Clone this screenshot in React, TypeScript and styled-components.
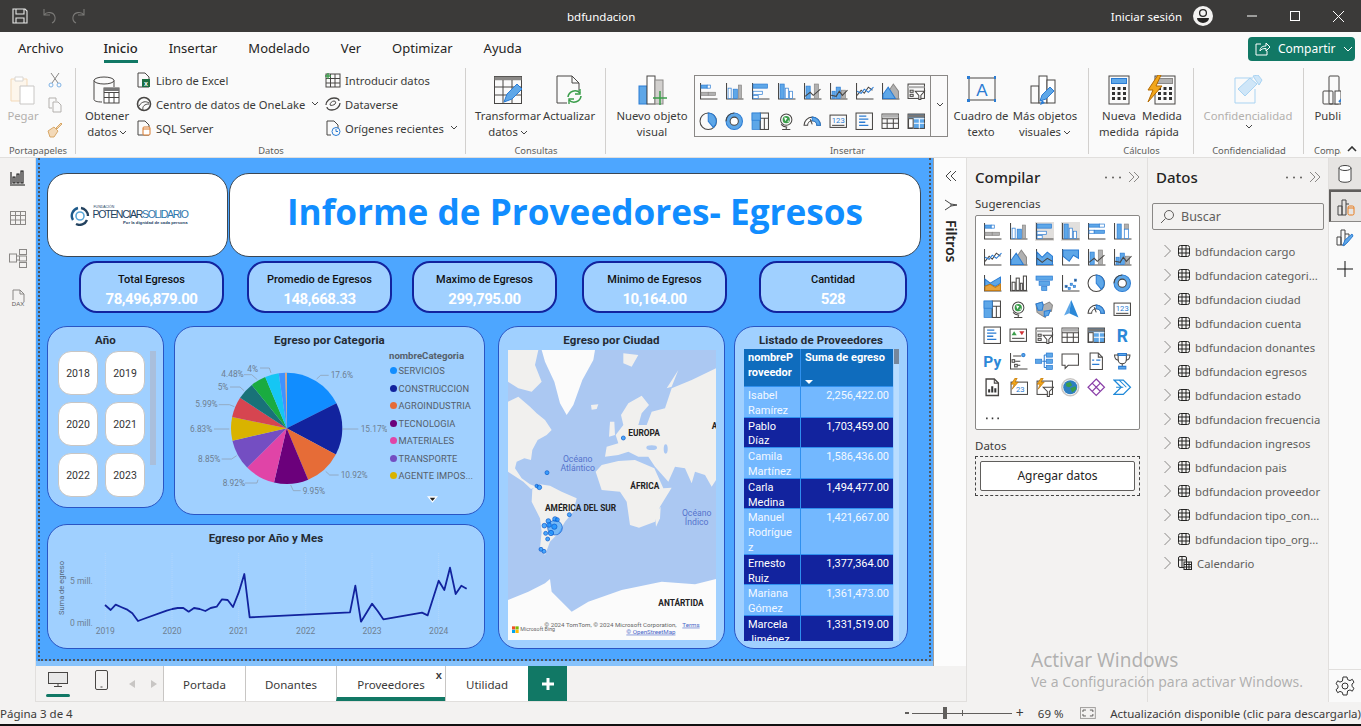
import React from 'react';
import styled, { createGlobalStyle } from 'styled-components';

const UI = `"Noto Sans", "Open Sans", "Liberation Sans", sans-serif`;
const DIN = `Roboto, "Liberation Sans", sans-serif`;

const Global = createGlobalStyle`
  html, body { margin: 0; padding: 0; background: #f3f2f1; }
  * { box-sizing: border-box; }
  body { font-family: ${UI}; }
`;

const Window = styled.div`
  position: relative;
  width: 1361px;
  height: 726px;
  overflow: hidden;
  display: flex;
  flex-direction: column;
  color: #252423;
`;

/* title bar */
const TitleBar = styled.div`
  height: 32px;
  flex: none;
  background: #3b3a39;
  color: #fff;
  display: flex;
  align-items: center;
  font-size: 11.5px;
`;
const QuickTools = styled.div`
  width: 567px;
  display: flex;
  align-items: center;
  gap: 12px;
  padding-left: 12px;
`;
const DocName = styled.div`
  flex: 1;
`;
const SignIn = styled.div`
  margin-right: 11px;
`;
const WinButtons = styled.div`
  display: flex;
  align-items: center;
  margin-left: 34px;
  gap: 33px;
  padding-right: 17px;
`;

/* tabs */
const TabRow = styled.div`
  height: 33px;
  flex: none;
  background: #fafafa;
  display: flex;
  align-items: center;
  padding: 0 6px 0 18px;
  gap: 31px;
  font-size: 13px;
`;
const MenuTab = styled.div<{ $active?: boolean; $first?: boolean }>`
  position: relative;
  height: 33px;
  line-height: 32px;
  margin-right: ${(p) => (p.$first ? 9 : 0)}px;
  font-weight: ${(p) => (p.$active ? 500 : 400)};
  &::after {
    content: '';
    display: ${(p) => (p.$active ? 'block' : 'none')};
    position: absolute;
    left: 0;
    right: 0;
    bottom: 2px;
    height: 3px;
    background: #117865;
  }
`;
const ShareButton = styled.div`
  margin-left: auto;
  width: 107px;
  height: 24px;
  background: #117865;
  color: #fff;
  border-radius: 4px;
  display: flex;
  align-items: center;
  gap: 7px;
  padding-left: 7px;
  font-size: 12px;
`;

/* ribbon */
const Ribbon = styled.div`
  height: 93px;
  flex: none;
  background: #fafafa;
  display: flex;
  border-bottom: 1px solid #e1dfdd;
`;
const Group = styled.div<{ $w: number; $pad?: number; $last?: boolean }>`
  width: ${(p) => p.$w}px;
  flex: none;
  padding-left: ${(p) => p.$pad || 0}px;
  display: flex;
  flex-direction: column;
  position: relative;
  overflow: hidden;
  &::after {
    content: '';
    display: ${(p) => (p.$last ? 'none' : 'block')};
    position: absolute;
    right: 0;
    top: 3px;
    bottom: 3px;
    width: 1px;
    background: #d2d0ce;
  }
`;
const GroupBody = styled.div`
  flex: 1;
  display: flex;
  padding-top: 10px;
`;
const GroupLabel = styled.div`
  height: 12px;
  margin-left: ${(p: { $off?: number }) => -(p.$off || 0)}px;
  text-align: center;
  font-size: 9.4px;
  line-height: 12px;
  color: #605e5c;
  white-space: nowrap;
`;
const LargeButton = styled.div<{ $w: number; $off?: boolean }>`
  width: ${(p) => p.$w}px;
  flex: none;
  display: flex;
  flex-direction: column;
  align-items: center;
  font-size: 11.3px;
  line-height: 16px;
  text-align: center;
  white-space: nowrap;
  color: ${(p) => (p.$off ? '#b3b0ad' : '#3b3a39')};
  svg { margin-bottom: 3px; flex: none; }
`;
const Chevron = styled.svg.attrs({ viewBox: '0 0 8 5', width: 8, height: 5 })`
  margin: 0 0 1px 2px !important;
  fill: none;
  stroke: #444;
  stroke-width: 1;
  vertical-align: middle;
`;
const ToolStack = styled.div`
  width: 26px;
  height: 66px;
  margin-top: -3px;
  display: flex;
  flex-direction: column;
  justify-content: space-between;
  align-items: center;
`;
const SmallColumn = styled.div<{ $w: number }>`
  width: ${(p) => p.$w}px;
  flex: none;
  display: flex;
  flex-direction: column;
  gap: 8px;
  margin-top: -3px;
`;
const SmallItem = styled.div`
  height: 16px;
  display: flex;
  align-items: center;
  gap: 4px;
  font-size: 11.2px;
  color: #3b3a39;
  white-space: nowrap;
`;
const Gallery = styled.div`
  margin-left: 2px;
  width: 254px;
  height: 62px;
  flex: none;
  display: flex;
  border: 1px solid #8a8886;
`;
const GalleryGrid = styled.div`
  flex: 1;
  display: grid;
  grid-template-columns: repeat(9, 26px);
  grid-auto-rows: 30px;
  place-items: center;
`;
const GalleryMore = styled.div`
  width: 17px;
  border-left: 1px solid #8a8886;
  display: flex;
  justify-content: center;
  padding-top: 26px;
`;
const Collapse = styled.svg.attrs({ viewBox: '0 0 10 6', width: 10, height: 6 })`
  position: absolute;
  left: 1347px;
  top: 146px;
  fill: none;
  stroke: #333;
  stroke-width: 1.6;
`;

/* main */
const Main = styled.div`
  flex: 1;
  display: flex;
  min-height: 0;
`;
const LeftNav = styled.div`
  width: 36px;
  flex: none;
  background: #f3f2f1;
  border-right: 1px solid #e1dfdd;
  display: flex;
  flex-direction: column;
  align-items: center;
  padding-top: 10px;
  gap: 20px;
`;
const Workspace = styled.div`
  width: 930px;
  flex: none;
  display: flex;
  flex-direction: column;
`;
const TopArea = styled.div`
  flex: 1;
  display: flex;
  background: #fcfcfc;
`;
const Canvas = styled.div`
  width: 898px;
  background: #4da6ff;
  border-right: 1px solid #a19f9d;
  display: flex;
  flex-direction: column;
`;
const Report = styled.div`
  height: 503px;
  margin: 0 2px 0 2px;
  border-left: 2px dotted #50565e;
  border-right: 2px dotted #50565e;
  border-bottom: 2px dotted #50565e;
  padding: 15px 0 0 7px;
`;
const CanvasFoot = styled.div`
  flex: 1;
  background: #86c2fb;
`;
const FilterPane = styled.div`
  flex: 1;
  display: flex;
  flex-direction: column;
  align-items: center;
  padding-top: 12px;
  padding-left: 2px;
`;
const FilterIcon = styled.svg.attrs({ viewBox: '0 0 14 14', width: 14, height: 14 })`
  margin-top: 16px;
  fill: none;
  stroke: #444;
  stroke-width: 1;
`;
const FilterLabel = styled.div`
  writing-mode: vertical-rl;
  font-size: 14px;
  font-weight: 600;
  margin-top: 8px;
  color: #252423;
`;

const HeaderRow = styled.div`
  display: flex;
  gap: 1px;
`;
const WhiteCard = styled.div<{ $w: number }>`
  width: ${(p) => p.$w}px;
  height: 84px;
  background: #fff;
  border: 1px solid #3b4754;
  border-radius: 20px;
  display: flex;
  align-items: center;
  justify-content: center;
`;
const LogoMark = styled.div`
  display: flex;
  align-items: center;
  gap: 2px;
  padding: 1px 17px 0 0;
`;
const LogoText = styled.div`
  display: flex;
  flex-direction: column;
  font-family: "Liberation Sans", sans-serif;
  color: #23425f;
`;
const LogoTiny = styled.span`
  font-size: 3.5px;
  line-height: 4px;
  padding-left: 1px;
`;
const LogoName = styled.span`
  font-size: 10.5px;
  line-height: 11px;
  letter-spacing: -1.3px;
  white-space: nowrap;
  b { font-weight: 400; color: #2f78ad; }
`;
const LogoTag = styled.span`
  font-size: 4.2px;
  line-height: 6px;
  font-weight: 700;
  text-align: right;
  white-space: nowrap;
`;
const ReportTitle = styled.div`
  font-family: "Open Sans", sans-serif;
  font-size: 35.2px;
  font-weight: 700;
  color: #118dff;
  white-space: nowrap;
  padding-bottom: 9px;
`;
const KpiRow = styled.div`
  display: flex;
  margin-top: 4px;
  height: 52px;
`;
const Kpi = styled.div<{ $left: number; $w?: number }>`
  width: ${(p) => p.$w || 145}px;
  margin-left: ${(p) => p.$left}px;
  background: #a0d0ff;
  border: 2px solid #12239e;
  border-radius: 18px;
  display: flex;
  flex-direction: column;
  align-items: center;
  padding-top: 10px;
`;
const KpiLabel = styled.div`
  font-family: ${DIN};
  font-size: 11px;
  font-weight: 500;
  line-height: 14px;
  color: #111;
  white-space: nowrap;
`;
const KpiValue = styled.div`
  font-family: ${DIN};
  font-size: 15px;
  font-weight: 700;
  line-height: 25px;
  color: #fff;
  letter-spacing: -0.45px;
`;
const Board = styled.div`
  display: flex;
  margin-top: 13px;
`;
const LeftColumn = styled.div`
  width: 438px;
  flex: none;
  display: flex;
  flex-direction: column;
  gap: 9px;
`;
const TopPair = styled.div`
  display: flex;
  gap: 10px;
  align-items: flex-start;
`;
const Card = styled.div<{ $w: number; $h: number; $left?: number }>`
  width: ${(p) => p.$w}px;
  height: ${(p) => p.$h}px;
  margin-left: ${(p) => p.$left || 0}px;
  flex: none;
  background: #a0d0ff;
  border: 1px solid #2a55c4;
  border-radius: 20px;
  overflow: hidden;
`;
const CardTitle = styled.div`
  height: 23px;
  text-align: center;
  font-family: ${DIN};
  font-size: 11.5px;
  font-weight: 700;
  line-height: 27px;
  color: #252b33;
  letter-spacing: 0.1px;
`;
const SlicerBody = styled.div`
  display: flex;
  padding-left: 10px;
  padding-top: 1px;
`;
const SlicerGrid = styled.div`
  display: grid;
  grid-template-columns: 40px 40px;
  grid-auto-rows: 44px;
  column-gap: 7px;
  row-gap: 7px;
`;
const SlicerItem = styled.div`
  background: #fff;
  border: 1px solid #c8c6c4;
  border-radius: 13px;
  display: flex;
  align-items: center;
  justify-content: center;
  font-family: ${DIN};
  font-size: 10.5px;
  color: #333;
`;
const SlicerScroll = styled.div`
  width: 6px;
  height: 114px;
  margin-left: 5px;
  background: #a9bfdc;
`;
const PieBody = styled.div`
  display: flex;
`;
const PieSvg = styled.svg`
  margin: 4.5px 0 0 -1px;
  flex: none;
  text {
    font-family: ${DIN};
    font-size: 25px;
    fill: #6e7f92;
  }
`;
const Legend = styled.div`
  position: relative;
  margin-left: 2px;
  width: 92px;
  height: 165px;
  font-family: ${DIN};
  font-size: 9.3px;
  color: #555f6b;
`;
const LegendHead = styled.div`
  font-weight: 700;
  font-size: 9.6px;
  line-height: 12px;
`;
const LegendItem = styled.div`
  display: flex;
  align-items: center;
  height: 17.5px;
  gap: 1.5px;
  padding-left: 1px;
  white-space: nowrap;
  letter-spacing: 0.1px;
`;
const LegendDot = styled.span<{ $c: string }>`
  width: 7px;
  height: 7px;
  border-radius: 50%;
  flex: none;
  background: ${(p) => p.$c};
`;
const LegendMore = styled.svg.attrs({ viewBox: '0 0 12 7', width: 11, height: 7 })`
  position: absolute;
  left: 38px;
  top: 146px;
`;
const LineSvg = styled.svg`
  display: block;
  margin: 1px 0 0 3px;
  text {
    font-family: ${DIN};
    font-size: 8.5px;
    fill: #6e7f92;
  }
`;
const MapFrame = styled.svg`
  display: block;
  margin: 0 0 0 9px;
  text { font-family: ${DIN}; }
`;
const TableWrap = styled.div`
  display: flex;
  margin: -1px 0 0 9px;
  height: 292px;
`;
const Table = styled.div`
  width: 149px;
  overflow: hidden;
  font-family: ${DIN};
  font-size: 11px;
  line-height: 14.8px;
`;
const TableRow = styled.div<{ $dark?: boolean; $head?: boolean }>`
  display: grid;
  grid-template-columns: 56px 93px;
  background: ${(p) => (p.$head ? '#0f6cbd' : p.$dark ? '#12239e' : '#73b8ff')};
  color: ${(p) => (p.$dark || p.$head ? '#fff' : '#f4f9ff')};
  font-weight: ${(p) => (p.$head ? 700 : 400)};
  border-bottom: 1px solid #2f8fee;
`;
const TableCell = styled.div<{ $right?: boolean }>`
  padding: 2px 4px 0;
  margin-bottom: -2px;
  white-space: pre-line;
  text-align: ${(p) => (p.$right ? 'right' : 'left')};
  & + & { border-left: 1px solid #2f8fee; }
`;
const HeadCell = styled(TableCell)<{ $sort?: boolean }>`
  position: relative;
  height: 37px;
  margin-bottom: 0;
  padding-top: 2px;
  white-space: pre;
  &::after {
    content: '';
    display: ${(p) => (p.$sort ? 'block' : 'none')};
    position: absolute;
    left: 4px;
    bottom: 2px;
    border: 4px solid transparent;
    border-top-color: #fff;
    border-bottom: 0;
  }
`;
const TableScroll = styled.div`
  width: 5px;
  margin-left: 1px;
  background: #b8dcff;
  &::before {
    content: '';
    display: block;
    height: 15px;
    background: #76879c;
  }
`;

/* page tabs */
const PageBar = styled.div`
  height: 36px;
  flex: none;
  background: #f3f2f1;
  display: flex;
  border-bottom: 1px solid #e1dfdd;
`;
const ViewTools = styled.div`
  width: 127px;
  flex: none;
  display: flex;
  align-items: center;
  padding-left: 9px;
`;
const ViewBtn = styled.div<{ $on?: boolean; $w: number; $left?: number }>`
  position: relative;
  width: ${(p) => p.$w}px;
  margin-left: ${(p) => p.$left || 0}px;
  height: 36px;
  display: flex;
  align-items: center;
  justify-content: center;
  padding-bottom: 8px;
  &::after {
    content: '';
    display: ${(p) => (p.$on ? 'block' : 'none')};
    position: absolute;
    left: 1px;
    width: 24px;
    bottom: 5px;
    height: 3px;
    border-radius: 2px;
    background: #117865;
  }
`;
const PageArrow = styled.svg.attrs({ viewBox: '0 0 6 8', width: 6, height: 8 })<{ $left: number }>`
  margin-left: ${(p) => p.$left}px;
  fill: #c8c6c4;
`;
const PageTab = styled.div<{ $w: number; $on?: boolean }>`
  position: relative;
  width: ${(p) => p.$w}px;
  flex: none;
  background: #fff;
  border-left: 1px solid #c8c6c4;
  font-size: 11.5px;
  text-align: center;
  line-height: 38px;
  color: #3b3a39;
  border-bottom: ${(p) => (p.$on ? '4px solid #117865' : '0')};
`;
const TabClose = styled.span`
  position: absolute;
  right: 3px;
  top: -10px;
  font-size: 11px;
  font-weight: 600;
`;
const AddPage = styled.div`
  width: 39px;
  background: #117865;
  display: flex;
  align-items: center;
  justify-content: center;
  color: #fff;
`;

/* panes */
const Pane = styled.div`
  width: 181px;
  flex: none;
  background: #f3f2f1;
  border-left: 1px solid #e1dfdd;
  padding-top: 8px;
  display: flex;
  flex-direction: column;
`;
const PaneHead = styled.div`
  height: 22px;
  display: flex;
  align-items: center;
  padding: 0 7px 0 8px;
`;
const PaneTitle = styled.div`
  flex: 1;
  font-size: 15px;
  font-weight: 500;
`;
const PaneDots = styled.svg.attrs({ viewBox: '0 0 18 3', width: 18, height: 3 })`
  margin-right: 6px;
  fill: #605e5c;
`;
const SectionLabel = styled.div`
  margin: 8px 0 0 8px;
  font-size: 11.5px;
  line-height: 16px;
  color: #3b3a39;
`;
const VizBox = styled.div`
  margin: 3px 0 0 8px;
  width: 165px;
  height: 215px;
  background: #fff;
  border: 1px solid #8a8886;
  border-radius: 2px;
  padding: 2px 0 0 3px;
  display: grid;
  grid-template-columns: repeat(6, 26px);
  grid-auto-rows: 26px;
  place-items: center;
`;
const DropZone = styled.div`
  margin: 2px 0 0 8px;
  width: 165px;
  height: 40px;
  border: 1px dashed #444;
  padding: 4px;
`;
const AddButton = styled.div`
  height: 30px;
  background: #fff;
  border: 1px solid #605e5c;
  border-radius: 2px;
  text-align: center;
  line-height: 28px;
  font-size: 12px;
`;
const SearchBox = styled.div`
  margin: 15px 0 0 4px;
  width: 172px;
  height: 27px;
  border: 1px solid #8a8886;
  border-radius: 2px;
  display: flex;
  align-items: center;
  gap: 7px;
  padding-left: 7px;
  font-size: 12.5px;
  color: #605e5c;
`;
const FieldList = styled.div`
  margin-top: 9px;
  padding-left: 15px;
`;
const FieldRow = styled.div`
  height: 24px;
  display: flex;
  align-items: center;
  gap: 5.5px;
  font-size: 11.3px;
  color: #605e5c;
  white-space: nowrap;
`;
const Rail = styled.div`
  flex: 1;
  background: #fafafa;
  border-left: 1px solid #e1dfdd;
  display: flex;
  flex-direction: column;
  align-items: center;
`;
const RailButton = styled.div<{ $on?: boolean; $sel?: boolean }>`
  width: 32px;
  height: ${(p) => (p.$on ? 32 : 31)}px;
  display: flex;
  align-items: center;
  justify-content: center;
  background: ${(p) => (p.$on ? '#e6e4e2' : 'transparent')};
  border: ${(p) => (p.$sel ? '2px solid #605e5c' : '0')};
  border-right: 0;
  border-bottom: ${(p) => (p.$on ? '1px solid #8a8886' : '0')};
`;
const RailFoot = styled.div`
  margin-top: auto;
  width: 100%;
  height: 33px;
  border-top: 1px solid #e1dfdd;
  display: flex;
  align-items: center;
  justify-content: center;
`;

/* status */
const StatusBar = styled.div`
  height: 24px;
  flex: none;
  background: #f3f2f1;
  border-bottom: 2px solid #111;
  display: flex;
  align-items: center;
  font-size: 11.5px;
  color: #3b3a39;
`;
const PageInfo = styled.div`
  width: 905px;
  flex: none;
`;
const ZoomMinus = styled.div`
  width: 4px;
  height: 2px;
  background: #605e5c;
`;
const ZoomTrack = styled.div`
  position: relative;
  width: 101px;
  height: 1px;
  margin-left: 3px;
  background: #605e5c;
`;
const ZoomThumb = styled.span`
  position: absolute;
  left: 31px;
  top: -6px;
  width: 4px;
  height: 12px;
  background: #605e5c;
`;
const ZoomTick = styled.span`
  position: absolute;
  left: 50px;
  top: -3px;
  width: 1px;
  height: 6px;
  background: #605e5c;
`;
const ZoomPlus = styled.div`
  margin-left: 4px;
  font-size: 14px;
  line-height: 14px;
`;
const ZoomValue = styled.div`
  margin-left: 14px;
  width: 43px;
`;
const UpdateNote = styled.div`
  margin-left: 14px;
  white-space: nowrap;
`;
const Watermark = styled.div`
  position: absolute;
  left: 1031px;
  top: 648px;
  color: rgba(120, 120, 120, 0.55);
  pointer-events: none;
  white-space: nowrap;
`;
const WatermarkBig = styled.div`
  font-size: 19px;
  line-height: 24px;
`;
const WatermarkSmall = styled.div`
  font-size: 14px;
  line-height: 20px;
`;

/* icons */
const INK = '#484644';
const BL = '#5ea7e8';
const BD = '#2b7cd3';
const GR = '#b1b1b1';

const Svg = ({ s = 30, vb = 30, children }: { s?: number; vb?: number; children: React.ReactNode }) => (
  <svg width={s} height={s} viewBox={`0 0 ${vb} ${vb}`} fill="none" stroke={INK} strokeWidth={1}>
    {children}
  </svg>
);
const Bar = (x: number, y: number, w: number, h: number, f = BL) => (
  <rect x={x} y={y} width={w} height={h} fill={f} stroke={f === GR ? '#8a8886' : BD} strokeWidth={0.7} />
);
const AxisL = <path d="M1.5 1v15.5H18" />;

const viz: Record<string, React.ReactNode> = {
  stackedBar: <>{AxisL}{Bar(2, 3, 6, 3)}{Bar(8, 3, 3, 3, '#fff')}{Bar(2, 10, 7, 3, GR)}{Bar(9, 10, 7, 3, GR)}</>,
  stackedCol: <>{AxisL}{Bar(3, 6, 3, 10, '#fff')}{Bar(8, 7, 4, 9)}{Bar(13, 3, 3, 13, GR)}</>,
  clusterBar: <>{AxisL}{Bar(2, 2, 14, 4)}{Bar(2, 9, 9, 3, '#fff')}{Bar(2, 13, 5, 3, '#fff')}</>,
  clusterCol: <>{AxisL}{Bar(3, 2, 4, 14)}{Bar(8, 6, 3, 10, '#fff')}{Bar(12, 9, 3, 7, '#fff')}</>,
  clusterBarSel: <><rect x="0" y="0" width="20" height="20" fill="#e1dfdd" stroke="none" />{AxisL}{Bar(2, 2, 14, 4)}{Bar(2, 9, 9, 3, '#fff')}{Bar(2, 13, 5, 3, '#fff')}</>,
  clusterColSel: <><rect x="0" y="0" width="20" height="20" fill="#e1dfdd" stroke="none" />{AxisL}{Bar(3, 2, 4, 14)}{Bar(8, 6, 3, 10, '#fff')}{Bar(12, 9, 3, 7, '#fff')}</>,
  bar100: <>{AxisL}{Bar(2, 2, 10, 3)}{Bar(12, 2, 5, 3, '#fff')}{Bar(2, 8, 5, 3, '#fff')}{Bar(7, 8, 10, 3)}</>,
  col100: <>{AxisL}{Bar(4, 2, 4, 14)}{Bar(11, 2, 4, 5, GR)}{Bar(11, 7, 4, 9, '#fff')}</>,
  line: <>{AxisL}<path d="M2 13l4-5 3 3 4-6 4 3" stroke={INK} /><path d="M2 9l4 2 3-4 4 3 5-5" stroke={BD} /></>,
  area: <>{AxisL}<path d="M8 8l4-6 5 7v7H8z" fill={GR} stroke="#8a8886" /><path d="M2 16v-4l5-7 7 11z" fill={BL} stroke={BD} /></>,
  areaStack: <>{AxisL}<path d="M2 4l5 5 5-5 5 4v8H2z" fill={BL} stroke={BD} /><path d="M2 10l5 4 5-4 5 3" stroke={INK} /></>,
  areaInv: <>{AxisL}<path d="M2 2h15v8l-5-3-4 6-6-5z" fill={BL} stroke={BD} /></>,
  lineCol: <>{AxisL}{Bar(3, 4, 4, 12)}{Bar(11, 2, 4, 14, GR)}<path d="M2 14l5-4 3 3 7-6" stroke={INK} /></>,
  lineCol2: <>{AxisL}{Bar(3, 9, 3, 7)}{Bar(7, 5, 4, 11)}{Bar(12, 8, 4, 8, GR)}<path d="M2 13l5 1 3-5 3 4 5-5" stroke={INK} /></>,
  ribbon: <>{AxisL}<path d="M2 5l5 4 5-3 5-3v6l-5 3-5-2-5 2z" fill={BL} stroke={BD} /><path d="M2 12l5-2 5 3 5-3v6H2z" fill="#e8a33d" stroke="#c47c16" /></>,
  waterfall: <><path d="M1.5 1v15.5H18" /><rect x="3" y="8" width="3" height="8" /><rect x="7" y="4" width="3" height="12" /><rect x="11" y="9" width="2" height="7" /><rect x="14" y="2" width="3" height="14" /></>,
  funnel: <>{Bar(1, 2, 16, 4)}{Bar(4, 7, 10, 4)}{Bar(6.5, 12, 5, 4)}</>,
  scatter: <><path d="M1.5 1v15.5H18" />{Bar(4, 11, 2, 2, INK)}{Bar(9, 9, 2, 2)}{Bar(13, 5, 2, 2, INK)}{Bar(12, 11, 2, 2)}{Bar(7, 13, 2, 2)}</>,
  pie: <><circle cx="9" cy="9" r="8" /><path d="M9 9V1a8 8 0 0 1 5 14z" fill={BL} stroke={BD} /></>,
  donut: <><circle cx="9" cy="9" r="8" stroke={BD} fill={BL} /><path d="M9 1a8 8 0 0 0-8 8" stroke={INK} /><circle cx="9" cy="9" r="4" fill="#fff" stroke={INK} /></>,
  treemap: <>{Bar(1, 1, 8, 16)}<rect x="9" y="1" width="8" height="16" /><path d="M9 6h8M13 6v11" />{Bar(1, 1, 8, 7)}</>,
  globe: <><circle cx="9" cy="7.5" r="5.5" /><circle cx="9" cy="7.5" r="3.5" fill="#3a9d4a" stroke="none" /><path d="M7 5l3 1-2 3zM11 8l1 1-2 1z" fill="#fff" stroke="none" /><path d="M4 12a7 7 0 0 0 6 2.5M9 14.5V17M5 17h8" /></>,
  filledMap: <><path d="M1 4l6-2 1 3 6-3 3 3-1 6-5 1-1 5-5-3-3-2z" fill={GR} stroke="#8a8886" /><path d="M1 4l6-2 1 3-1 5H3zM9 11l6-1-2 5-4 1z" fill={BL} stroke={BD} /></>,
  azure: <><path d="M10 0L3 15l5-2z" fill={BL} stroke="none" /><path d="M10 0l7 17-9-4z" fill="#2b88d8" stroke="none" /></>,
  gauge: <><path d="M1 13a8 8 0 0 1 16 0h-3.5a4.5 4.5 0 0 0-9 0z" fill="#fff" /><path d="M9 5a8 8 0 0 1 8 8h-3.5A4.5 4.5 0 0 0 9 8.5z" fill={BL} stroke={BD} /><path d="M7 7l2 5" /></>,
  card: <><rect x="1" y="3" width="16" height="12" /><path d="M3 13h12" /><text x="9" y="11" textAnchor="middle" fontSize="7.5" fill={BD} stroke="none" fontFamily="Roboto">123</text></>,
  multi: <><rect x="1" y="1" width="16" height="16" /><path d="M4 4h7M4 7h9M4 10h6M4 13h9" stroke={BD} strokeWidth={1.3} /></>,
  kpi: <><rect x="1" y="3" width="16" height="12" /><path d="M5 5l2.5 4h-5z" fill="#3a9d4a" stroke="none" /><path d="M10 5h5l-2.5 4z" fill="#d13438" stroke="none" /><path d="M3 12h12" /></>,
  slicer: <><rect x="1" y="2" width="16" height="14" /><path d="M1 5h16" strokeWidth={2} stroke={GR} /><rect x="3" y="8" width="3" height="2" /><rect x="3" y="12" width="3" height="2" /><path d="M8 9h9l-3.5 4v4h-2v-4z" fill="#fff" /></>,
  table: <><rect x="1" y="2" width="16" height="14" /><path d="M1 6.5h16M1 11h16M6 6v10M12 6v10" /><path d="M1 4h16" stroke={GR} strokeWidth={3} /></>,
  matrix: <><rect x="1" y="2" width="16" height="14" fill={BL} stroke={INK} /><path d="M1 4h16" stroke="#777" strokeWidth={3} /><path d="M1 6.5h16M1 11h16M6 6v10M12 6v10" stroke="#fff" /><rect x="1.5" y="6.5" width="4.5" height="9" fill="#fff" stroke={INK} /></>,
  rLang: <text x="9" y="15.5" textAnchor="middle" fontSize="17" fontWeight="700" fill="#2b88d8" stroke="none" fontFamily="Roboto">R</text>,
  pyLang: <text x="9" y="14.5" textAnchor="middle" fontSize="15" fontWeight="700" fill="#2b88d8" stroke="none" fontFamily="Roboto">Py</text>,
  influencers: <><path d="M1.5 1v15.5H18" /><path d="M4 4h8M6 9h5M8 13h3" /><circle cx="14" cy="3" r="1.6" fill={BL} stroke={BD} /><rect x="3" y="7.5" width="2.5" height="2.5" /><rect x="5.5" y="12" width="2.5" height="2.5" /></>,
  decomp: <>{Bar(0.5, 7, 6, 4)}{Bar(11, 1, 6, 4)}{Bar(11, 7, 6, 4)}{Bar(11, 13, 6, 4)}<path d="M7 9h4M9 3v12M9 3h2M9 15h2" stroke={BD} /></>,
  qna: <path d="M1 2h16v11H7l-3 3v-3H1z" stroke={INK} fill="#fff" />,
  narrative: <><path d="M3 1h8l4 4v12H3z" /><path d="M11 1v4h4" /><path d="M5 8h2M9 8h4M5 12h7" stroke={BD} strokeWidth={1.2} /></>,
  trophy: <><path d="M5 1.5h8v6a4 4 0 0 1-8 0z" stroke={INK} /><path d="M5 1.5h8v2H5z" fill={BL} stroke={BD} /><path d="M5 3H1.5c0 3 1.5 5 4 5M13 3h3.5c0 3-1.5 5-4 5M9 11.5V14" /><path d="M5.5 14h7v2.5h-7z" fill={BL} stroke={BD} /></>,
  paginated: <><path d="M3 1h8l4 4v12H3z" strokeWidth={1.3} /><path d="M11 1v4h4" /><path d="M6 14v-3M9 14V8M12 14v-4" stroke="#333" strokeWidth={2} /></>,
  flashCard: <><rect x="2" y="4" width="16" height="12" /><text x="11" y="14" textAnchor="middle" fontSize="7.5" fill={BD} stroke="none" fontFamily="Roboto">23</text><path d="M6 0L2 6h3L3 11l6-7H6l2-4z" fill="#f2a71b" stroke="#b46a00" strokeWidth={0.6} /></>,
  flashSlicer: <><rect x="2" y="3" width="15" height="13" /><path d="M8 9h10l-4 4v5h-2v-5z" fill="#fff" /><path d="M6 0L2 6h3L3 11l6-7H6l2-4z" fill="#f2a71b" stroke="#b46a00" strokeWidth={0.6} /></>,
  arcgis: <><circle cx="9" cy="9" r="8.2" stroke="#c8c6c4" strokeWidth={1.5} /><circle cx="9" cy="9" r="6.8" fill="#2f7fc1" stroke="none" /><path d="M5 5l4-1 2 3-3 2-3-1zM9 10l5-2 1 3-4 3z" fill="#3a9d4a" stroke="none" /></>,
  powerApps: <path d="M9 1l8 8-8 8-8-8zM5 5l4 4 4-4M5 13l4-4 4 4" stroke="#8a3fa8" strokeWidth={1.2} />,
  automate: <><path d="M1 2h9l7 7-7 7H1l7-7z" stroke="#1e88d8" strokeWidth={1.2} /><path d="M6 2l7 7M3 9h7" stroke="#1e88d8" /></>,
  dots: <path d="M3 14h1.5M8.5 14H10M14 14h1.5" strokeWidth={1.6} stroke="#333" />,
};
const Viz = ({ k, s = 19 }: { k: string; s?: number }) => (
  <Svg s={s} vb={18.5}>{viz[k]}</Svg>
);

const galleryIcons = [
  'stackedBar', 'stackedCol', 'clusterBar', 'clusterCol', 'lineCol', 'lineCol2', 'line', 'area', 'slicer',
  'pie', 'donut', 'treemap', 'globe', 'gauge', 'card', 'multi', 'table', 'matrix',
];
const buildIcons = [
  'stackedBar', 'stackedCol', 'clusterBarSel', 'clusterColSel', 'bar100', 'col100',
  'line', 'area', 'areaStack', 'areaInv', 'lineCol', 'lineCol2',
  'ribbon', 'waterfall', 'funnel', 'scatter', 'pie', 'donut',
  'treemap', 'globe', 'filledMap', 'azure', 'gauge', 'card',
  'multi', 'kpi', 'slicer', 'table', 'matrix', 'rLang',
  'pyLang', 'influencers', 'decomp', 'qna', 'narrative', 'trophy',
  'paginated', 'flashCard', 'flashSlicer', 'arcgis', 'powerApps', 'automate',
  'dots',
];

const Pencil = ({ x, y }: { x: number; y: number }) => (
  <path transform={`translate(${x} ${y})`} d="M0 14L2 8 10 0l4 4-8 8z" fill={BL} stroke="#2b7cd3" />
);
const PasteIcon = () => (
  <Svg>
    <path d="M3 4h16v22H3z" stroke="#f3d9b8" fill="#fdf6ec" />
    <path d="M7 2h8v4H7z" stroke="#d8d6d4" fill="#fff" />
    <path d="M12 11h14v18H12z" stroke="#c8c6c4" fill="#fff" />
  </Svg>
);
const GetDataIcon = () => (
  <Svg>
    <ellipse cx="12" cy="5.5" rx="10" ry="3.5" />
    <path d="M2 5.5v19c0 1.5 3 2.5 8 2.5M22 5.5V12" />
    <rect x="12" y="13" width="15" height="15" fill="#fff" />
    <path d="M12 17.5h15M12 22.5h15M17 17v11M22 17v11" />
    <path d="M12 14.5h15" strokeWidth={3} stroke="#777" />
  </Svg>
);
const TransformIcon = () => (
  <Svg>
    <rect x="1.5" y="1.5" width="27" height="27" />
    <path d="M1.5 3.5h27" stroke="#8a8886" strokeWidth={3.5} />
    <path d="M1.5 12h27M1.5 20h27M10 5v24M19 5v24" />
    <g transform="translate(11 9)"><path d="M0 18L3 10 13 0l5 5-10 10z" fill={BL} stroke="#2b7cd3" /></g>
  </Svg>
);
const RefreshIcon = () => (
  <Svg>
    <path d="M3 1h15l7 7v8M13 28H3V1M18 1v7h7" />
    <path d="M14 22a7 7 0 0 1 12-4M27 21a7 7 0 0 1-12 4" stroke="#3a9d4a" strokeWidth={1.6} />
    <path d="M26 14v5h-5M15 29v-5h5" stroke="#3a9d4a" strokeWidth={1.4} />
  </Svg>
);
const NewVisualIcon = () => (
  <Svg>
    <rect x="2" y="11" width="8" height="18" fill={BL} stroke={BD} />
    <rect x="10" y="1" width="8" height="28" fill="#fff" />
    <rect x="18" y="5" width="8" height="24" fill="#d2d0ce" stroke="#8a8886" />
    <path d="M16 23h14M23 16v14" stroke="#3a9d4a" strokeWidth={1.5} />
  </Svg>
);
const TextBoxIcon = () => (
  <Svg>
    <rect x="3" y="3" width="26" height="22" />
    <rect x="1" y="1" width="3" height="3" fill={BD} stroke="none" />
    <rect x="28" y="1" width="3" height="3" fill={BD} stroke="none" />
    <rect x="1" y="24" width="3" height="3" fill={BD} stroke="none" />
    <rect x="28" y="24" width="3" height="3" fill={BD} stroke="none" />
    <text x="16" y="21" textAnchor="middle" fontSize="17" fill={BD} stroke="none" fontFamily="Liberation Sans">A</text>
  </Svg>
);
const MoreVisualsIcon = () => (
  <Svg>
    <rect x="1" y="11" width="8" height="17" />
    <rect x="9" y="1" width="8" height="27" fill="#fff" />
    <rect x="17" y="5" width="8" height="23" fill="#fff" />
    <Pencil x={10} y={12} />
    <path d="M10 30l2-5 3 3z" fill={BD} stroke="none" />
  </Svg>
);
const Calculator = ({ head = BL }: { head?: string }) => (
  <>
    <rect x="5" y="1" width="20" height="28" />
    <rect x="7.500" y="3.500" width="15" height="5" fill={head} stroke={head === BL ? BD : '#8a8886'} />
    {[12, 17, 22].map((y) => [8, 13.500, 19].map((x) => <rect key={`${x}${y}`} x={x} y={y} width="3" height="3" fill="#333" stroke="none" />))}
  </>
);
const MeasureIcon = () => (
  <Svg><Calculator /></Svg>
);
const QuickMeasureIcon = () => (
  <Svg>
    <g transform="translate(3 0)"><Calculator head={GR} /></g>
    <path d="M11 0L1 15h5L1 27l14-16H9l5-11z" fill="#f2a71b" stroke="#b46a00" />
  </Svg>
);
const SensitivityIcon = () => (
  <Svg>
    <path d="M2 3h18M2 3v25h20V14" stroke="#a9d3f2" />
    <path d="M5 14L17 3l7 6-12 12z" fill="#cfe6f8" stroke="#a9d3f2" />
    <path d="M20 1l5-1 4 5-3 5z" fill="#cfe6f8" stroke="#a9d3f2" />
  </Svg>
);
const PublishIcon = () => (
  <Svg>
    <rect x="2" y="16" width="10" height="13" rx="1" />
    <rect x="8" y="1" width="10" height="28" rx="1" />
    <rect x="14" y="16" width="6" height="13" fill="#fff" />
    <path d="M18 27l6-6" stroke={BD} strokeWidth={2} />
  </Svg>
);
const ExcelIcon = () => (
  <Svg s={16} vb={16}>
    <path d="M2 1h7l4 4v10H2z" />
    <rect x="6" y="7" width="8" height="8" fill="#1d6f42" stroke="none" />
    <text x="10" y="14" textAnchor="middle" fontSize="7" fontWeight="700" fill="#fff" stroke="none" fontFamily="Liberation Sans">x</text>
  </Svg>
);
const OneLakeIcon = () => (
  <Svg s={16} vb={16}>
    <circle cx="8" cy="8" r="6.5" strokeWidth={1.6} />
    <path d="M3 10c3-5 7-5 10-3M7 14c-1-4 2-6 6-6" strokeWidth={1} />
  </Svg>
);
const SqlIcon = () => (
  <Svg s={16} vb={16}>
    <path d="M2 1h7l4 4v10H2z" />
    <rect x="7" y="7" width="7" height="8" rx="1" fill="#fff" stroke="#d8782a" />
    <path d="M7 9h7" stroke="#d8782a" />
  </Svg>
);
const EnterDataIcon = () => (
  <Svg s={16} vb={16}>
    <rect x="1" y="2" width="14" height="13" />
    <path d="M1 6.5h14M1 11h14M5.5 2v13M10 2v13" />
    <path d="M0 4h6M3 1v6" stroke="#3a9d4a" strokeWidth={1.3} />
  </Svg>
);
const DataverseIcon = () => (
  <Svg s={16} vb={16}>
    <path d="M1 9c0-4 4-7 8-7 3 0 5 1 5 3M15 7c0 4-4 7-8 7-3 0-5-1-5-3" strokeWidth={1.3} />
    <path d="M5 9c0-2 2-4 4-4 2 0 2 2 1 3s-4 2-5 1z" />
  </Svg>
);
const RecentIcon = () => (
  <Svg s={16} vb={16}>
    <path d="M2 1h7l4 4v3M6 15H2V1" />
    <circle cx="11" cy="11.5" r="4" stroke={BD} />
    <path d="M11 9v2.5h2" stroke={BD} />
  </Svg>
);
const TableGlyph = () => (
  <svg width="12" height="12" viewBox="0 0 12 12" fill="none" stroke="#252423" strokeWidth={1}>
    <rect x="0.5" y="0.5" width="11" height="11" rx="2" />
    <path d="M0.5 4h11M0.5 8h11M4 0.5v11M8 0.5v11" />
  </svg>
);
const CalendarGlyph = () => (
  <svg width="14" height="14" viewBox="0 0 14 14" fill="none" stroke="#252423" strokeWidth={1}>
    <rect x="0.5" y="0.5" width="8" height="11" rx="1.5" />
    <path d="M0.5 4h8M4 0.5v11" />
    <rect x="6" y="6" width="7.5" height="7.5" fill="#f3f2f1" />
    <path d="M6 8.5h7.5M6 11h7.5M8.5 6v7.5M11 6v7.5" />
  </svg>
);
const Caret = () => (
  <svg width="9" height="14" viewBox="0 0 9 14" fill="none" stroke="#8a8886" strokeWidth={1}>
    <path d="M1.5 1l6 6-6 6" />
  </svg>
);
const ChevronPair = styled.svg.attrs({ viewBox: '0 0 12 12', width: 12, height: 12 })<{ $flip?: boolean }>`
  fill: none;
  stroke: ${(p) => (p.$flip ? '#444' : '#8a8886')};
  stroke-width: 1;
  transform: ${(p) => (p.$flip ? 'scaleX(-1)' : 'none')};
`;

/* data */
const kpis = [
  { label: 'Total Egresos', value: '78,496,879.00', left: 32 },
  { label: 'Promedio de Egresos', value: '148,668.33', left: 23 },
  { label: 'Maximo de Egresos', value: '299,795.00', left: 20 },
  { label: 'Minimo de Egresos', value: '10,164.00', left: 25 },
  { label: 'Cantidad', value: '528', left: 32, w: 148 },
];
const years = ['2018', '2019', '2020', '2021', '2022', '2023'];
const slices = [
  [17.6, '#118DFF'], [15.17, '#12239E'], [10.92, '#E66C37'], [9.95, '#6B007B'],
  [8.92, '#E044A7'], [8.85, '#744EC2'], [6.83, '#D9B300'], [5.99, '#D64550'],
  [5, '#197278'], [4.48, '#1AAB40'], [4, '#15C6F4'], [1.9, '#4092FF'], [0.39, '#FFA058'],
] as [number, string][];
const pieLabels: [string, number, number, string][] = [
  ['17.6%', 482, 158, 'M440 160l12-11h24'],
  ['15.17%', 572, 320, 'M517 310h48'],
  ['10.92%', 512, 458, 'M467 437l12 11h27'],
  ['9.95%', 398, 506, 'M362 478l8 17h22'],
  ['8.92%', 158, 482, 'M264 462l-3 10h-36'],
  ['8.85%', 84, 410, 'M200 390l-15 10h-30'],
  ['6.83%', 60, 320, 'M178 310h-46'],
  ['5.99%', 76, 245, 'M193 243l-15-6h-32'],
  ['5%', 143, 192, 'M222 195l-12-11h-30'],
  ['4.48%', 154, 155, 'M262 162l-17-15h-23'],
  ['4%', 232, 138, 'M303 142l-5-15h-28'],
];
const legend = [
  ['SERVICIOS', '#118DFF'], ['CONSTRUCCION', '#12239E'], ['AGROINDUSTRIA', '#E66C37'], ['TECNOLOGIA', '#6B007B'],
  ['MATERIALES', '#E044A7'], ['TRANSPORTE', '#744EC2'], ['AGENTE IMPOS...', '#D9B300'],
];
const trend = [
  [315, 255], [332, 270], [347, 254], [363, 261], [380, 268], [397, 280], [414, 303], [430, 297], [500, 272],
  [517, 267], [533, 264], [550, 264], [566, 275], [582, 264], [599, 267], [616, 273], [632, 264], [650, 260],
  [666, 238], [683, 240], [699, 261], [716, 218], [733, 162], [749, 292], [1050, 277], [1066, 197], [1083, 305],
  [1116, 251], [1133, 273], [1150, 298], [1266, 278], [1283, 286], [1316, 182], [1333, 210], [1350, 143],
  [1367, 222], [1384, 197], [1400, 206],
];
const trendYears: [string, number][] = [['2019', 316], ['2020', 516], ['2021', 716], ['2022', 917], ['2023', 1116], ['2024', 1316]];
const bubbles = [
  [385, 339, 6], [156, 443, 6], [125, 483, 5], [133, 487, 7], [223, 569, 6], [160, 588, 7], [180, 582, 7], [187, 584, 6],
  [148, 602, 7], [162, 600, 7], [178, 605, 8], [152, 625, 6], [168, 624, 8], [158, 642, 6], [138, 673, 6], [147, 679, 6],
];
const suppliers = [
  ['Isabel\nRamírez', '2,256,422.00'],
  ['Pablo\nDíaz', '1,703,459.00'],
  ['Camila\nMartínez', '1,586,436.00'],
  ['Carla\nMedina', '1,494,477.00'],
  ['Manuel\nRodrígue\nz', '1,421,667.00'],
  ['Ernesto\nRuiz', '1,377,364.00'],
  ['Mariana\nGómez', '1,361,473.00'],
  ['Marcela\nJiménez', '1,331,519.00'],
];
const fields = ['cargo', 'categori...', 'ciudad', 'cuenta', 'donantes', 'egresos', 'estado', 'frecuencia', 'ingresos', 'pais', 'proveedor', 'tipo_con...', 'tipo_org...'];

const PieChart = () => {
  const cx = 350;
  const cy = 308;
  const r = 167;
  let acc = 0;
  return (
    <PieSvg width={213} height={141} viewBox="12 88 639 423">
      {slices.map(([v, c]) => {
        const a0 = (acc / 100) * Math.PI * 2;
        acc += v;
        const a1 = (acc / 100) * Math.PI * 2;
        const d = `M${cx} ${cy}L${cx + r * Math.sin(a0)} ${cy - r * Math.cos(a0)}A${r} ${r} 0 ${a1 - a0 > Math.PI ? 1 : 0} 1 ${cx + r * Math.sin(a1)} ${cy - r * Math.cos(a1)}Z`;
        return <path key={c} d={d} fill={c} />;
      })}
      {pieLabels.map(([t, x, y, d]) => (
        <g key={t}>
          <path d={d} fill="none" stroke="#8c99a8" strokeWidth={2} />
          <text x={x} y={y}>{t}</text>
        </g>
      ))}
    </PieSvg>
  );
};

const TrendChart = () => (
  <LineSvg width={434} height={100} viewBox="0 0 434 100">
    {trendYears.map(([, x]) => (
      <path key={x} d={`M${x / 3 - 51} 4V76`} stroke="#b7d9fb" strokeWidth={0.7} strokeDasharray="1 1" />
    ))}
    <text transform="translate(13 39) rotate(-90)" textAnchor="middle" style={{ fontSize: 7.5, fill: '#56677a' }}>Suma de egreso</text>
    <text x="19" y="34.500">5 mill.</text>
    <text x="19" y="77">0 mill.</text>
    {trendYears.map(([y, x]) => (
      <text key={y} x={x / 3 - 51} y="85" textAnchor="middle">{y}</text>
    ))}
    <polyline
      points={trend.map(([x, y]) => `${x / 3 - 51},${y / 3 - 29}`).join(' ')}
      fill="none"
      stroke="#12239e"
      strokeWidth={1.8}
      strokeLinejoin="round"
    />
  </LineSvg>
);

const WorldMap = () => (
  <MapFrame width={208} height={290} viewBox="39 75 624 870">
    <rect x="39" y="75" width="624" height="870" fill="#abc8f2" />
    <g fill="#f1f0ee">
      <path d="M39 230L70 215 105 245 125 265 150 285 170 315 155 330 128 345 112 375 108 405 88 400 65 410 60 430 80 460 105 478 125 486 108 492 85 470 39 440Z" />
      <path d="M39 75H130L120 120 140 170 110 200 70 190 39 170Z" />
      <path d="M140 75H300L295 105 262 165 235 240 215 270 195 235 178 170 150 110Z" fill="#fbfbfb" />
      <path d="M385 85L430 90 410 125 385 115ZM515 190L550 135 530 185ZM288 240L310 238 305 252 290 254Z" />
      <path d="M112 492L135 478 165 482 200 500 245 520 235 560 210 590 190 625 165 650 150 690 135 670 140 620 135 580 110 530Z" />
      <path d="M302 440L320 420 370 408 420 405 450 418 478 430 505 490 530 488 495 545 480 590 432 608 405 600 395 530 375 500 320 495Z" />
      <path d="M330 395L335 365 370 355 362 330 385 300 378 270 400 235 440 212 462 240 440 265 430 300 455 300 470 260 510 250 530 190 590 165 663 130V465L650 485 630 450 600 440 590 475 570 430 540 425 520 470 480 425 460 395 430 395 400 380 370 390Z" />
      <path d="M345 290L358 290 360 330 342 335Z" />
      <path d="M480 570L497 545 495 580 483 605Z" />
      <path d="M39 825L100 800 150 775 165 762 170 800 230 860 280 830 380 795 500 770 600 778 663 762V945H39Z" fill="#fbfbfb" />
    </g>
    <ellipse cx="470" cy="368" rx="16" ry="7" fill="#abc8f2" />
    <ellipse cx="512" cy="372" rx="6" ry="14" fill="#abc8f2" />
    <g fill="#118dff" fillOpacity="0.75" stroke="#0a58c9" strokeWidth="2">
      <circle cx="180" cy="608" r="22" fillOpacity="0.55" />
      {bubbles.map(([x, y, r]) => <circle key={`${x}-${y}`} cx={x} cy={y} r={r} />)}
    </g>
    <g fill="#222" fontSize="25" fontWeight="700">
      <text x="400" y="333">EUROPA</text>
      <text x="406" y="491">ÁFRICA</text>
      <text x="150" y="558">AMÉRICA DEL SUR</text>
      <text x="490" y="844">ANTÁRTIDA</text>
      <text x="650" y="312">A</text>
    </g>
    <g fill="#5573cc" fontSize="26" textAnchor="middle">
      <text x="248" y="411">Océano</text>
      <text x="248" y="437">Atlántico</text>
      <text x="605" y="572">Océano</text>
      <text x="605" y="599">Índico</text>
    </g>
    <rect x="51" y="904" width="9.5" height="9.5" fill="#f25022" />
    <rect x="61.5" y="904" width="9.5" height="9.5" fill="#7fba00" />
    <rect x="51" y="914.5" width="9.5" height="9.5" fill="#00a4ef" />
    <rect x="61.5" y="914.5" width="9.5" height="9.5" fill="#ffb900" />
    <g fontSize="16" fill="#666">
      <text x="76" y="919">Microsoft Bing</text>
    </g>
    <text x="148" y="905" fontSize="18.500" fill="#666">© 2024 TomTom, © 2024 Microsoft Corporation,</text>
    <g fontSize="18.500" fill="#4a67c8" textDecoration="underline">
      <text x="562" y="905">Terms</text>
      <text x="394" y="926">© OpenStreetMap</text>
    </g>
  </MapFrame>
);

export default function App() {
  return (
    <Window>
      <Global />
      <TitleBar>
        <QuickTools>
          <svg width="16" height="16" viewBox="0 0 16 16" fill="none" stroke="#e8e8e8" strokeWidth={1.1}>
            <path d="M1 1h12l2 2v12H1zM4 1v5h8V1M4 15v-5h8v5" />
          </svg>
          <svg width="18" height="16" viewBox="0 0 18 16" fill="none" stroke="#7a7977" strokeWidth={1.1}>
            <path d="M4 1v6h6M4 7c3-4 10-3 11 2 .5 3-1 5-3 6" />
          </svg>
          <svg width="18" height="16" viewBox="0 0 18 16" fill="none" stroke="#7a7977" strokeWidth={1.1}>
            <path d="M14 1v6H8M14 7c-3-4-10-3-11 2-.5 3 1 5 3 6" />
          </svg>
        </QuickTools>
        <DocName>bdfundacion</DocName>
        <SignIn>Iniciar sesión</SignIn>
        <svg width="20" height="20" viewBox="0 0 20 20">
          <circle cx="10" cy="10" r="10" fill="#f3f2f1" />
          <circle cx="10" cy="7" r="3.4" fill="none" stroke="#252423" strokeWidth={1.3} />
          <path d="M4 12h12a6 5 0 0 1-12 0z" fill="#252423" />
        </svg>
        <WinButtons>
          <svg width="10" height="10" viewBox="0 0 10 10" stroke="#fff" strokeWidth={1}><path d="M0 5h10" /></svg>
          <svg width="10" height="10" viewBox="0 0 10 10" fill="none" stroke="#fff" strokeWidth={1}><rect x="0.5" y="0.5" width="9" height="9" /></svg>
          <svg width="11" height="11" viewBox="0 0 11 11" stroke="#fff" strokeWidth={1}><path d="M0 0l11 11M11 0L0 11" /></svg>
        </WinButtons>
      </TitleBar>

      <TabRow>
        <MenuTab $first>Archivo</MenuTab>
        <MenuTab $active>Inicio</MenuTab>
        <MenuTab>Insertar</MenuTab>
        <MenuTab>Modelado</MenuTab>
        <MenuTab>Ver</MenuTab>
        <MenuTab>Optimizar</MenuTab>
        <MenuTab>Ayuda</MenuTab>
        <ShareButton>
          <svg width="16" height="14" viewBox="0 0 16 14" fill="none" stroke="#fff" strokeWidth={1}>
            <path d="M6 2H1v11h11V9M5 9c0-4 3-5 6-5V1l4 4-4 4V6.500C8 6.500 6 7 5 9z" />
          </svg>
          Compartir
          <svg width="10" height="6" viewBox="0 0 10 6" fill="none" stroke="#fff" strokeWidth={1}><path d="M1 1l4 4 4-4" /></svg>
        </ShareButton>
      </TabRow>

      <Ribbon>
        <Group $w={76} $pad={4}>
          <GroupBody>
            <LargeButton $w={38} $off><PasteIcon />Pegar</LargeButton>
            <ToolStack>
              <svg width="14" height="16" viewBox="0 0 14 16" fill="none" stroke="#8a8886"><path d="M3 1l7 10M11 1L4 11" /><circle cx="3" cy="13" r="2" stroke="#7fb2e5" /><circle cx="11" cy="13" r="2" stroke="#7fb2e5" /></svg>
              <svg width="14" height="16" viewBox="0 0 14 16" fill="none" stroke="#b3b0ad"><path d="M1 1h7v3M1 1v10h3M5 5h5l3 3v7H5z" /></svg>
              <svg width="16" height="16" viewBox="0 0 16 16" fill="#f3d9b8" stroke="#d8a868"><path d="M1 9l6-4 4 4-4 6H3zM9 6l5-5 1 1-5 5z" /></svg>
            </ToolStack>
          </GroupBody>
          <GroupLabel $off={4}>Portapapeles</GroupLabel>
        </Group>

        <Group $w={390} $pad={2}>
          <GroupBody>
            <LargeButton $w={58}>
              <GetDataIcon />
              Obtener
              <span>datos<Chevron><path d="M1 1l3 3 3-3" /></Chevron></span>
            </LargeButton>
            <SmallColumn $w={189}>
              <SmallItem><ExcelIcon />Libro de Excel</SmallItem>
              <SmallItem><OneLakeIcon />Centro de datos de OneLake<Chevron><path d="M1 1l3 3 3-3" /></Chevron></SmallItem>
              <SmallItem><SqlIcon />SQL Server</SmallItem>
            </SmallColumn>
            <SmallColumn $w={135}>
              <SmallItem><EnterDataIcon />Introducir datos</SmallItem>
              <SmallItem><DataverseIcon />Dataverse</SmallItem>
              <SmallItem><RecentIcon />Orígenes recientes<Chevron><path d="M1 1l3 3 3-3" /></Chevron></SmallItem>
            </SmallColumn>
          </GroupBody>
          <GroupLabel $off={2}>Datos</GroupLabel>
        </Group>

        <Group $w={140} $pad={6}>
          <GroupBody>
            <LargeButton $w={72}>
              <TransformIcon />
              Transformar
              <span>datos<Chevron><path d="M1 1l3 3 3-3" /></Chevron></span>
            </LargeButton>
            <LargeButton $w={50}><RefreshIcon />Actualizar</LargeButton>
          </GroupBody>
          <GroupLabel $off={6}>Consultas</GroupLabel>
        </Group>

        <Group $w={483} $pad={6}>
          <GroupBody>
            <LargeButton $w={80}>
              <NewVisualIcon />
              Nuevo objeto
              <span>visual</span>
            </LargeButton>
            <Gallery>
              <GalleryGrid>
                {galleryIcons.map((k) => <Viz key={k} k={k} />)}
              </GalleryGrid>
              <GalleryMore><Chevron><path d="M1 1l3 3 3-3" /></Chevron></GalleryMore>
            </Gallery>
            <LargeButton $w={66}>
              <TextBoxIcon />
              Cuadro de
              <span>texto</span>
            </LargeButton>
            <LargeButton $w={62}>
              <MoreVisualsIcon />
              Más objetos
              <span>visuales<Chevron><path d="M1 1l3 3 3-3" /></Chevron></span>
            </LargeButton>
          </GroupBody>
          <GroupLabel $off={6}>Insertar</GroupLabel>
        </Group>

        <Group $w={105} $pad={8}>
          <GroupBody>
            <LargeButton $w={44}><MeasureIcon />Nueva<span>medida</span></LargeButton>
            <LargeButton $w={42}><QuickMeasureIcon />Medida<span>rápida</span></LargeButton>
          </GroupBody>
          <GroupLabel $off={8}>Cálculos</GroupLabel>
        </Group>

        <Group $w={110}>
          <GroupBody>
            <LargeButton $w={108} $off>
              <SensitivityIcon />
              Confidencialidad
              <Chevron><path d="M1 1l3 3 3-3" /></Chevron>
            </LargeButton>
          </GroupBody>
          <GroupLabel>Confidencialidad</GroupLabel>
        </Group>

        <Group $w={37} $pad={10} $last>
          <GroupBody>
            <LargeButton $w={44}><PublishIcon />Publicar</LargeButton>
          </GroupBody>
          <GroupLabel>Compartir</GroupLabel>
        </Group>
      </Ribbon>
      <Collapse><path d="M1 5l4-4 4 4" /></Collapse>

      <Main>
        <LeftNav>
          <svg width="15" height="20" viewBox="0 0 15 20" fill="none" stroke="#111" strokeWidth={1.1}>
            <path d="M1 4v12M3 9h2v6H3zM7 6h2v9H7zM11 3h2v12h-2zM0 17h15" />
          </svg>
          <svg width="16" height="20" viewBox="0 0 16 20" fill="none" stroke="#8a8886" strokeWidth={1}>
            <rect x="0.5" y="3.500" width="15" height="13" />
            <path d="M0.500 7.500h15M0.500 12h15M5.500 3.500v13M10.500 3.500v13" />
          </svg>
          <svg width="18" height="20" viewBox="0 0 18 20" fill="none" stroke="#8a8886" strokeWidth={1}>
            <rect x="0.5" y="6" width="7" height="8" />
            <rect x="10.500" y="1.500" width="7" height="5" />
            <rect x="10.500" y="8" width="7" height="5" />
            <rect x="10.500" y="14.500" width="7" height="5" />
            <path d="M7.500 8h3M7.500 12h3" />
          </svg>
          <svg width="18" height="20" viewBox="0 0 18 20" fill="none" stroke="#8a8886" strokeWidth={1}>
            <path d="M4 12V2h7l4 4v8M11 2v4h4" />
            <text x="9" y="18" textAnchor="middle" fontSize="6" fill="#605e5c" stroke="none" fontFamily="Liberation Sans">DAX</text>
          </svg>
        </LeftNav>

        <Workspace>
          <TopArea>
            <Canvas>
              <Report>
                <HeaderRow>
                  <WhiteCard $w={181}>
                    <LogoMark>
                      <svg width="20" height="20" viewBox="0 0 20 20" fill="none" strokeWidth={2.4}>
                        <path d="M3 14A8 8 0 0 1 8 2" stroke="#1e5a8a" />
                        <path d="M11 2a8 8 0 0 1 7 8" stroke="#23425f" />
                        <path d="M17 14a8 8 0 0 1-11 4" stroke="#23425f" />
                        <circle cx="10" cy="10" r="4" stroke="#5aa7d8" strokeWidth={1.6} />
                      </svg>
                      <LogoText>
                        <LogoTiny>FUNDACIÓN</LogoTiny>
                        <LogoName>POTENCIAR<b>SOLIDARIO</b></LogoName>
                        <LogoTag>Por la dignidad de cada persona</LogoTag>
                      </LogoText>
                    </LogoMark>
                  </WhiteCard>
                  <WhiteCard $w={692}>
                    <ReportTitle>Informe de Proveedores- Egresos</ReportTitle>
                  </WhiteCard>
                </HeaderRow>

                <KpiRow>
                  {kpis.map((k) => (
                    <Kpi key={k.label} $left={k.left} $w={k.w}>
                      <KpiLabel>{k.label}</KpiLabel>
                      <KpiValue>{k.value}</KpiValue>
                    </Kpi>
                  ))}
                </KpiRow>

                <Board>
                  <LeftColumn>
                    <TopPair>
                      <Card $w={117} $h={182}>
                        <CardTitle>Año</CardTitle>
                        <SlicerBody>
                          <SlicerGrid>
                            {years.map((y) => <SlicerItem key={y}>{y}</SlicerItem>)}
                          </SlicerGrid>
                          <SlicerScroll />
                        </SlicerBody>
                      </Card>
                      <Card $w={311} $h={189}>
                        <CardTitle>Egreso por Categoria</CardTitle>
                        <PieBody>
                          <PieChart />
                          <Legend>
                            <LegendHead>nombreCategoria</LegendHead>
                            {legend.map(([t, c]) => (
                              <LegendItem key={t}><LegendDot $c={c} />{t}</LegendItem>
                            ))}
                            <LegendMore>
                              <path d="M0 0h12L6 7z" fill="#fff" />
                              <path d="M3 1.500h6L6 5z" fill="#222" />
                            </LegendMore>
                          </Legend>
                        </PieBody>
                      </Card>
                    </TopPair>
                    <Card $w={438} $h={125}>
                      <CardTitle>Egreso por Año y Mes</CardTitle>
                      <TrendChart />
                    </Card>
                  </LeftColumn>

                  <Card $w={227} $h={323} $left={13}>
                    <CardTitle>Egreso por Ciudad</CardTitle>
                    <WorldMap />
                  </Card>

                  <Card $w={174} $h={323} $left={9}>
                    <CardTitle>Listado de Proveedores</CardTitle>
                    <TableWrap>
                      <Table>
                        <TableRow $head>
                          <HeadCell>{'nombreP\nroveedor'}</HeadCell>
                          <HeadCell $sort>Suma de egreso</HeadCell>
                        </TableRow>
                        {suppliers.map(([name, total], i) => (
                          <TableRow key={name} $dark={i % 2 === 1}>
                            <TableCell>{name}</TableCell>
                            <TableCell $right>{total}</TableCell>
                          </TableRow>
                        ))}
                      </Table>
                      <TableScroll />
                    </TableWrap>
                  </Card>
                </Board>
              </Report>
              <CanvasFoot />
            </Canvas>
            <FilterPane>
              <ChevronPair $flip><path d="M1 1l5 5-5 5M6 1l5 5-5 5" /></ChevronPair>
              <FilterIcon><path d="M1 2l6 4 6 1-6 1-6 4M7 6v2" /></FilterIcon>
              <FilterLabel>Filtros</FilterLabel>
            </FilterPane>
          </TopArea>
          <PageBar>
            <ViewTools>
              <ViewBtn $w={26} $on>
                <svg width="20" height="16" viewBox="0 0 20 16" fill="none" stroke="#484644" strokeWidth={1}>
                  <rect x="0.5" y="0.5" width="19" height="11" fill="#e8e8e8" />
                  <path d="M10 12v2M6 14.500h8" />
                </svg>
              </ViewBtn>
              <ViewBtn $w={14} $left={23}>
                <svg width="13" height="20" viewBox="0 0 13 20" fill="none" stroke="#484644" strokeWidth={1}>
                  <rect x="0.5" y="0.5" width="12" height="19" rx="1.5" />
                  <path d="M5.500 17h2" />
                </svg>
              </ViewBtn>
              <PageArrow $left={21}><path d="M6 0v8L0 4z" /></PageArrow>
              <PageArrow $left={16}><path d="M0 0v8l6-4z" /></PageArrow>
            </ViewTools>
            <PageTab $w={82}>Portada</PageTab>
            <PageTab $w={91}>Donantes</PageTab>
            <PageTab $w={109} $on>Proveedores<TabClose>x</TabClose></PageTab>
            <PageTab $w={83}>Utilidad</PageTab>
            <AddPage>
              <svg width="12" height="12" viewBox="0 0 12 12" fill="#fff"><path d="M4.500 0h3v4.500H12v3H7.500V12h-3V7.500H0v-3h4.500z" /></svg>
            </AddPage>
          </PageBar>
        </Workspace>

        <Pane>
          <PaneHead>
            <PaneTitle>Compilar</PaneTitle>
            <PaneDots><circle cx="2" cy="1.500" r="1" /><circle cx="9" cy="1.500" r="1" /><circle cx="16" cy="1.500" r="1" /></PaneDots>
            <ChevronPair><path d="M1 1l5 5-5 5M6 1l5 5-5 5" /></ChevronPair>
          </PaneHead>
          <SectionLabel>Sugerencias</SectionLabel>
          <VizBox>
            {buildIcons.map((k) => <Viz key={k} k={k} />)}
          </VizBox>
          <SectionLabel>Datos</SectionLabel>
          <DropZone><AddButton>Agregar datos</AddButton></DropZone>
        </Pane>

        <Pane>
          <PaneHead>
            <PaneTitle>Datos</PaneTitle>
            <PaneDots><circle cx="2" cy="1.500" r="1" /><circle cx="9" cy="1.500" r="1" /><circle cx="16" cy="1.500" r="1" /></PaneDots>
            <ChevronPair><path d="M1 1l5 5-5 5M6 1l5 5-5 5" /></ChevronPair>
          </PaneHead>
          <SearchBox>
            <svg width="14" height="14" viewBox="0 0 14 14" fill="none" stroke="#605e5c" strokeWidth={1}>
              <circle cx="9" cy="5" r="4.500" />
              <path d="M5.500 8.500L1 13" />
            </svg>
            Buscar
          </SearchBox>
          <FieldList>
            {fields.map((f) => (
              <FieldRow key={f}><Caret /><TableGlyph />{`bdfundacion ${f}`}</FieldRow>
            ))}
            <FieldRow><Caret /><CalendarGlyph />Calendario</FieldRow>
          </FieldList>
        </Pane>

        <Rail>
          <RailButton $on>
            <svg width="16" height="18" viewBox="0 0 16 18" fill="#fff" stroke="#444" strokeWidth={1}>
              <path d="M2 3v12c0 3 12 3 12 0V3" /><ellipse cx="8" cy="3" rx="6" ry="2.500" />
            </svg>
          </RailButton>
          <RailButton $on $sel>
            <svg width="18" height="18" viewBox="0 0 18 18" fill="none" stroke="#444" strokeWidth={1}>
              <path d="M1 8h4v9H1zM5 2h4v15H5zM9 6h3" />
              <rect x="11" y="8" width="6" height="9" rx="1.500" stroke="#e87d1e" />
              <path d="M11 10h6" stroke="#e87d1e" />
            </svg>
          </RailButton>
          <RailButton>
            <svg width="18" height="18" viewBox="0 0 18 18" fill="none" stroke="#444" strokeWidth={1}>
              <path d="M1 8h4v8H1zM5 1h4v15H5zM9 5h4v4" />
              <path d="M7 16l2-5 7-6 1 2-6 7-4 3z" fill={BL} stroke={BD} />
            </svg>
          </RailButton>
          <RailButton>
            <svg width="16" height="16" viewBox="0 0 16 16" stroke="#111" strokeWidth={1}><path d="M8 0v16M0 8h16" /></svg>
          </RailButton>
          <RailFoot>
            <svg width="20" height="20" viewBox="0 0 20 20" fill="none" stroke="#333" strokeWidth={1}>
              <path d="M8 1h4l.6 2.600 2.400 1 2.300-1.300 1.700 3-2 1.700v2.500l2 1.700-1.700 3-2.300-1.300-2.400 1L12 19H8l-.6-2.600-2.400-1-2.300 1.300-1.700-3 2-1.700V9.500l-2-1.700 1.700-3 2.300 1.300 2.400-1z" />
              <circle cx="10" cy="10" r="3" />
            </svg>
          </RailFoot>
        </Rail>
      </Main>

      <StatusBar>
        <PageInfo>Página 3 de 4</PageInfo>
        <ZoomMinus />
        <ZoomTrack><ZoomThumb /><ZoomTick /></ZoomTrack>
        <ZoomPlus>+</ZoomPlus>
        <ZoomValue>69 %</ZoomValue>
        <svg width="16" height="12" viewBox="0 0 16 12" fill="none" stroke="#605e5c" strokeWidth={1}>
          <rect x="0.5" y="0.5" width="15" height="11" stroke="#a19f9d" />
          <path d="M3 5V3h3M10 3h3v2M13 7v2h-3M6 9H3V7" />
        </svg>
        <UpdateNote>Actualización disponible (clic para descargarla)</UpdateNote>
      </StatusBar>

      <Watermark>
        <WatermarkBig>Activar Windows</WatermarkBig>
        <WatermarkSmall>Ve a Configuración para activar Windows.</WatermarkSmall>
      </Watermark>
    </Window>
  );
}
